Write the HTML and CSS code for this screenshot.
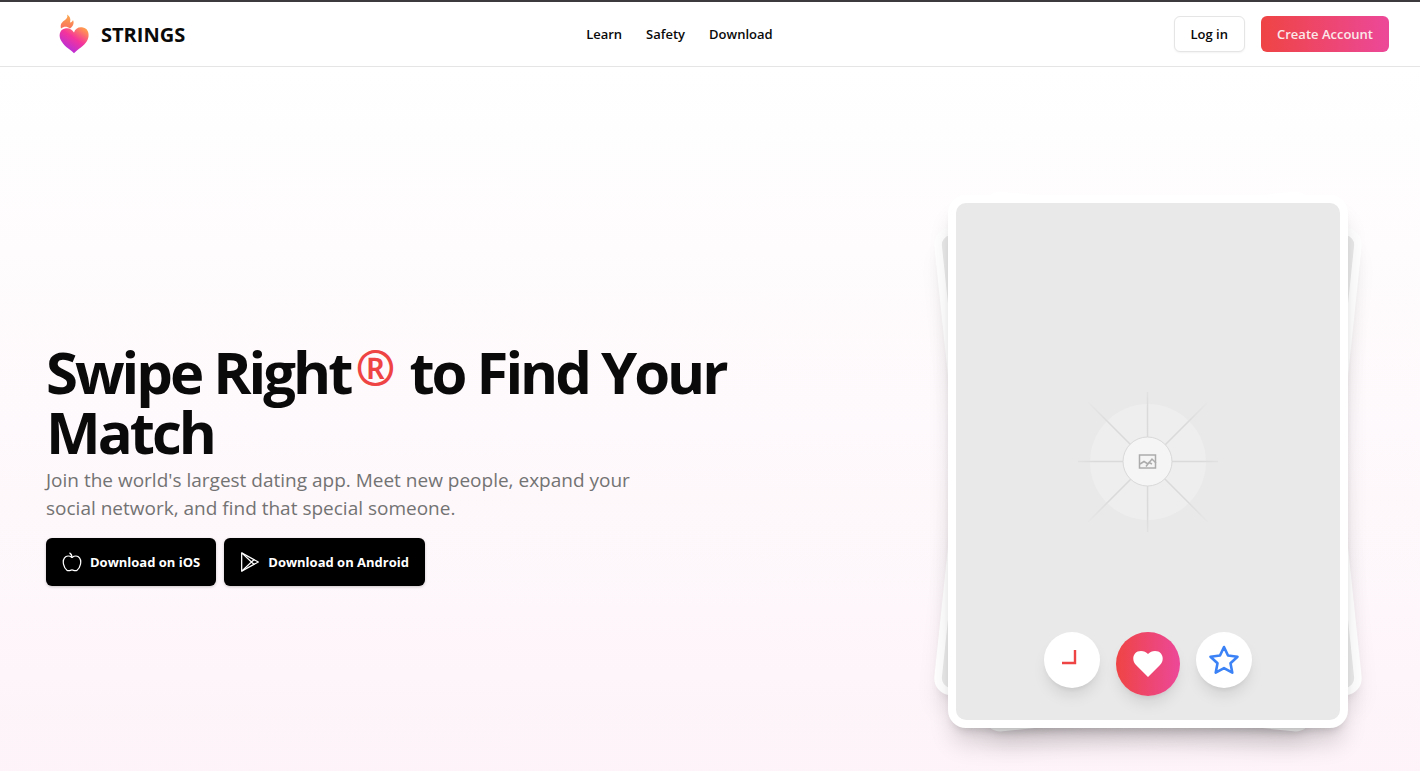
FILE: index.html
```html
<!DOCTYPE html>
<html lang="en">
<head>
    <meta charset="UTF-8">
    <meta name="viewport" content="width=device-width, initial-scale=1.0">
    <title>Strings</title>
    <link rel="stylesheet" href="styles.css">
</head>
<body>
    <header class="site-header">
        <a href="#" class="brand">
            <svg class="brand-logo" viewBox="0 0 40 40" aria-hidden="true">
                <defs>
                    <linearGradient id="heartFill" x1="0.85" y1="0.05" x2="0.25" y2="0.85">
                        <stop offset="0" stop-color="#ff9a4d"/>
                        <stop offset="0.5" stop-color="#f5349b"/>
                        <stop offset="1" stop-color="#b82fd8"/>
                    </linearGradient>
                    <linearGradient id="flameFill" x1="0.5" y1="0" x2="0.3" y2="1">
                        <stop offset="0" stop-color="#fba94c"/>
                        <stop offset="1" stop-color="#f9705f"/>
                    </linearGradient>
                </defs>
                <path fill="url(#flameFill)" d="M7 14.5C6 10 8 8 11 6C13 4 14 3 13 0.5C16 2 17 5 16 8.5C17.5 8.5 18.5 7.5 19 6C20.5 9 19 12.5 16 14.5C13 12 10 12 7 14.5Z"/>
                <path fill="url(#heartFill)" d="M20 39.3C17 36 11 33 8 28C4 23 5 15.5 11 14.5C15 13.5 18 15.5 20 18.5C21 14.5 25 12.5 29 13.5C35 14.5 36 22 33 27C30 32 24 35 20 39.3Z"/>
            </svg>
            <span>STRINGS</span>
        </a>
        <nav class="main-nav">
            <a href="#">Learn</a>
            <a href="#">Safety</a>
            <a href="#">Download</a>
        </nav>
        <div class="header-actions">
            <button type="button" class="btn login-btn">Log in</button>
            <button type="button" class="btn signup-btn">Create Account</button>
        </div>
    </header>

    <main class="hero">
        <div class="hero-grid">
            <section class="hero-text">
                <h1>Swipe Right<span class="mark">®</span> to Find Your Match</h1>
                <p>Join the world's largest dating app. Meet new people, expand your social network, and find that special someone.</p>
                <div class="download-buttons">
                    <button type="button" class="btn store-btn">
                        <svg viewBox="0 0 24 24" aria-hidden="true">
                            <path d="M12 6.5C9 4.5 5 4.500 3 7C0 11 2 19 6 22C9 23.5 10 21.5 12 21.5C14 21.5 15 23.5 18 22C22 19 24 11 21 7C19 4.500 15 4.500 12 6.500Z"/>
                            <path d="M12 7C12 4 11 2 9 1"/>
                        </svg>
                        Download on iOS
                    </button>
                    <button type="button" class="btn store-btn">
                        <svg viewBox="0 0 24 24" aria-hidden="true">
                            <path d="M2 1L22 12L2 23Z"/>
                            <path d="M2 1L17 15M2 23L17 9"/>
                        </svg>
                        Download on Android
                    </button>
                </div>
            </section>

            <section class="card-stack">
                <div class="card card-left"></div>
                <div class="card card-right"></div>
                <div class="card card-front">
                    <svg class="placeholder" viewBox="0 0 160 160" aria-hidden="true">
                        <defs>
                            <radialGradient id="rayFade" gradientUnits="userSpaceOnUse" cx="80" cy="80" r="88">
                                <stop offset="0.6" stop-color="#dadada"/>
                                <stop offset="1" stop-color="#e9e9e9"/>
                            </radialGradient>
                        </defs>
                        <circle cx="80" cy="80" r="58" fill="#eeeeee"/>
                        <path stroke="url(#rayFade)" stroke-width="1.5" d="M79.5 10L79.6 150M10 79.5L150 79.6M20 20L140 140.1M140 20L20 140"/>
                        <circle cx="79.5" cy="79.5" r="24.5" fill="#f5f5f5" stroke="#d9d9d9"/>
                        <g fill="none" stroke="#acacac" stroke-width="1.5">
                            <rect x="71.5" y="73" width="16" height="13"/>
                            <path d="M72 82L76 79.5L80 82L84 77L88 81M78 84.5L81 80.5L84 82"/>
                        </g>
                    </svg>
                    <div class="card-actions">
                        <button type="button" class="round-btn" aria-label="Nope">
                            <svg viewBox="0 0 32 32" aria-hidden="true">
                                <path d="M19 6V19H6" fill="none" stroke="#ef4444" stroke-width="2.4"/>
                            </svg>
                        </button>
                        <button type="button" class="round-btn like-btn" aria-label="Like">
                            <svg viewBox="0 0 32 32" aria-hidden="true">
                                <path d="M16 29L4 17C-1 12 1 3 9 3C12 3 14 4 16 6C18 4 20 3 23 3C31 3 33 12 28 17Z" fill="#fff"/>
                            </svg>
                        </button>
                        <button type="button" class="round-btn" aria-label="Super like">
                            <svg viewBox="0 0 32 32" aria-hidden="true">
                                <path d="M16 3L20 11.5L29.5 12.7L22.5 19.2L24.3 28.7L16 24.1L7.7 28.7L9.5 19.2L2.5 12.7L12 11.5Z" fill="none" stroke="#3b82f6" stroke-width="2.6" stroke-linejoin="round"/>
                            </svg>
                        </button>
                    </div>
                </div>
            </section>
        </div>
    </main>
</body>
</html>
```

FILE: styles.css
```css
* {
    box-sizing: border-box;
}

body {
    margin: 0;
    min-height: 100vh;
    display: flex;
    flex-direction: column;
    border-top: 2px solid #3c3a3c;
    font-family: "Open Sans", "Noto Sans", sans-serif;
    color: #0a0a0a;
    background-color: #fff;
}

.site-header {
    display: flex;
    align-items: center;
    justify-content: space-between;
    height: 65px;
    padding: 0 31px 0 54px;
    border-bottom: 1px solid #e5e5e5;
    background-color: #fff;
}

.brand {
    display: flex;
    align-items: center;
    gap: 7px;
    color: #0a0a0a;
    font-size: 20px;
    font-weight: 700;
    text-decoration: none;
}

.brand-logo {
    width: 40px;
    height: 40px;
}

.main-nav {
    display: flex;
    gap: 24px;
}

.main-nav a {
    color: #0a0a0a;
    font-size: 13px;
    font-weight: 600;
    text-decoration: none;
}

.header-actions {
    display: flex;
    gap: 16px;
}

.btn {
    height: 36px;
    padding: 0 16px;
    border: none;
    border-radius: 6px;
    font-family: inherit;
    font-size: 13px;
    font-weight: 600;
    cursor: pointer;
}

.login-btn {
    border: 1px solid #e5e5e5;
    background-color: #fff;
    color: #0a0a0a;
    box-shadow: 0 1px 2px rgba(0, 0, 0, 0.05);
}

.signup-btn {
    background: linear-gradient(to right, #ef4444, #ec4899);
    color: #fbe9ea;
}

.hero {
    flex: 1;
    padding: 128px 46px 40px;
    background: linear-gradient(to bottom, #fff 0%, #fdf2f8 112%);
    overflow: hidden;
}

.hero-grid {
    display: grid;
    grid-template-columns: 1fr 452px;
    align-items: center;
}

.hero-text {
    padding-top: 4px;
}

.hero-text h1 {
    max-width: 740px;
    margin: 0 0 4px;
    font-size: 58px;
    font-weight: 700;
    line-height: 60px;
    letter-spacing: -3px;
}

.mark {
    margin: 0 5px;
    color: #ef4444;
    font-size: 48px;
    line-height: 1;
    vertical-align: 8px;
}

.hero-text p {
    max-width: 600px;
    margin: 0 0 16px;
    color: #737373;
    font-size: 19px;
    line-height: 28px;
}

.download-buttons {
    display: flex;
    gap: 8px;
}

.store-btn {
    display: flex;
    align-items: center;
    gap: 8px;
    height: 48px;
    background-color: #000;
    color: #fff;
    font-weight: 700;
    box-shadow: 0 1px 3px rgba(0, 0, 0, 0.2);
}

.store-btn svg {
    width: 20px;
    height: 20px;
    fill: none;
    stroke: #fff;
    stroke-width: 1.5;
    stroke-linejoin: round;
}

/* Stack of profile cards */
.card-stack {
    display: grid;
    justify-content: center;
}

.card {
    grid-area: 1 / 1;
    width: 400px;
    height: 533px;
    border: 8px solid #fff;
    border-radius: 18px;
    background-color: #e9e9e9;
    box-shadow: 0 20px 25px -5px rgba(0, 0, 0, 0.08), 0 8px 10px -6px rgba(0, 0, 0, 0.08);
}

.card-left {
    transform: rotate(-6deg) scale(0.95);
}

.card-right {
    transform: rotate(6deg) scale(0.95);
}

.card-front {
    position: relative;
    display: flex;
    align-items: center;
    justify-content: center;
    box-shadow: 0 20px 25px -5px rgba(0, 0, 0, 0.16), 0 8px 10px -6px rgba(0, 0, 0, 0.16);
}

.placeholder {
    width: 160px;
    height: 160px;
}

.card-actions {
    position: absolute;
    right: 0;
    bottom: 24px;
    left: 0;
    display: flex;
    justify-content: center;
    align-items: flex-start;
    gap: 16px;
}

.round-btn {
    display: flex;
    align-items: center;
    justify-content: center;
    width: 56px;
    height: 56px;
    padding: 0;
    border: none;
    border-radius: 50%;
    background-color: #fff;
    box-shadow: 0 10px 15px -3px rgba(0, 0, 0, 0.1), 0 4px 6px -4px rgba(0, 0, 0, 0.1);
    cursor: pointer;
}

.round-btn svg {
    width: 32px;
    height: 32px;
}

.like-btn {
    width: 64px;
    height: 64px;
    background: linear-gradient(to right, #ef4444, #ec4899);
}
```
